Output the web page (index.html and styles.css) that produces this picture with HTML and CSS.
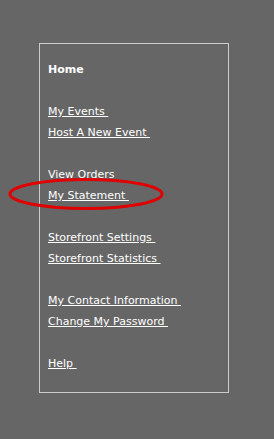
FILE: index.html
```html
<!DOCTYPE html>
<html lang="en">
<head>
    <meta charset="UTF-8">
    <title>Account Menu</title>
    <link rel="stylesheet" href="styles.css">
</head>
<body>
    <div class="menu-box">
        <div class="menu-title">Home</div>
        <div class="spacer"></div>
        <a href="#">My Events&nbsp;</a>
        <a href="#">Host A New Event&nbsp;</a>
        <div class="spacer"></div>
        <span class="current">View Orders</span>
        <a href="#" class="marked">My Statement&nbsp;<svg class="circle" width="160" height="36" viewBox="0 0 160 36"><ellipse cx="78" cy="18" rx="76" ry="14.5" fill="none" stroke="#e00000" stroke-width="3"/></svg></a>
        <div class="spacer"></div>
        <a href="#">Storefront Settings&nbsp;</a>
        <a href="#">Storefront Statistics&nbsp;</a>
        <div class="spacer"></div>
        <a href="#">My Contact Information&nbsp;</a>
        <a href="#">Change My Password&nbsp;</a>
        <div class="spacer"></div>
        <a href="#">Help&nbsp;</a>
    </div>
</body>
</html>
```

FILE: styles.css
```css
body {
    margin: 0;
    background: #666666;
    font-family: "DejaVu Sans", Verdana, sans-serif;
    font-size: 11px;
    color: #ffffff;
}
.menu-box {
    margin: 43px 0 0 39px;
    width: 172px;
    padding: 15px 8px 18px 8px;
    border: 1px solid #cccccc;
    display: flex;
    flex-direction: column;
    align-items: flex-start;
    line-height: 21px;
}
.menu-title {
    font-weight: bold;
}
.spacer {
    height: 21px;
}
.menu-box a {
    color: #ffffff;
    text-decoration: underline;
}
.marked {
    position: relative;
}
.circle {
    position: absolute;
    left: -40px;
    top: -9px;
}
```
